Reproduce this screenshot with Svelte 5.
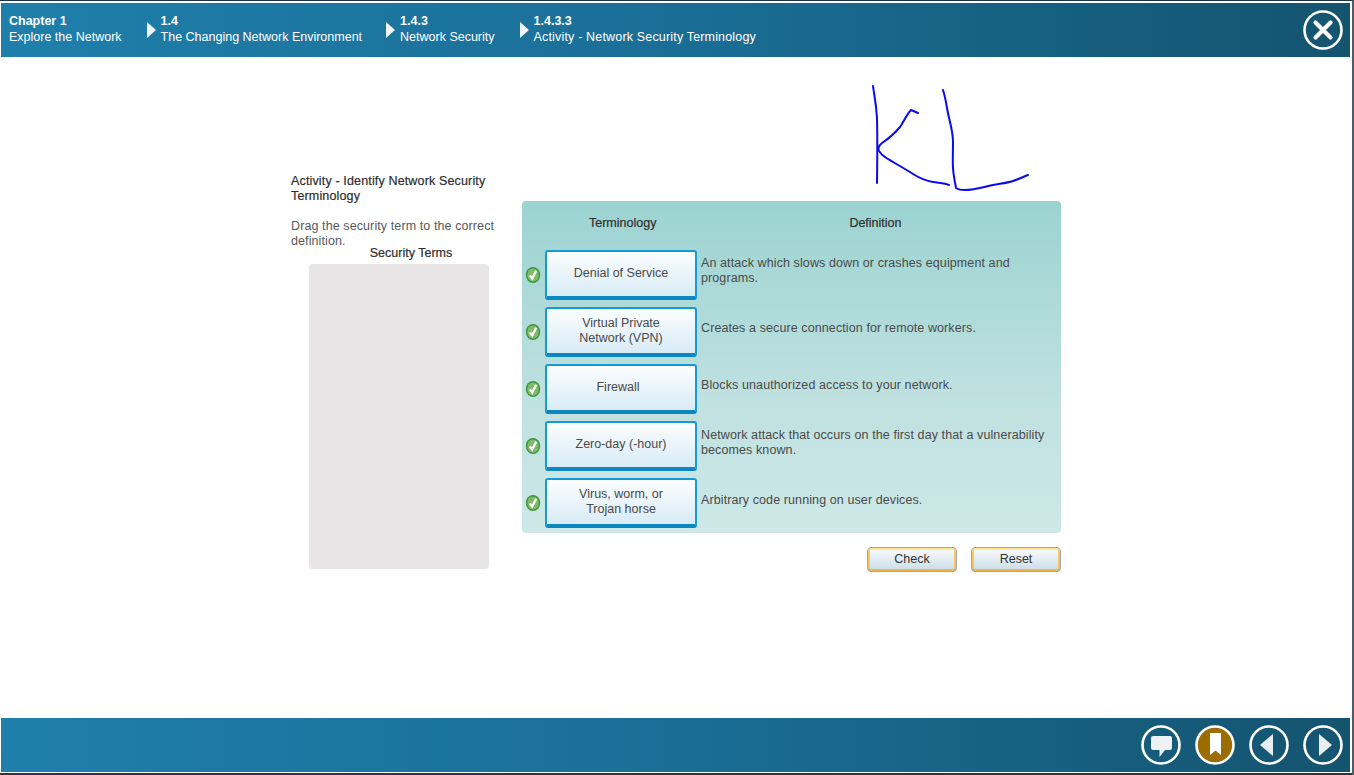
<script>
  const crumbs = [
    { num: "Chapter 1", title: "Explore the Network" },
    { num: "1.4", title: "The Changing Network Environment" },
    { num: "1.4.3", title: "Network Security" },
    { num: "1.4.3.3", title: "Activity - Network Security Terminology" },
  ];

  const rows = [
    { term: ["Denial of Service"], def: "An attack which slows down or crashes equipment and programs." },
    { term: ["Virtual Private", "Network (VPN)"], def: "Creates a secure connection for remote workers." },
    { term: ["Firewall"], def: "Blocks unauthorized access to your network.", off: true },
    { term: ["Zero-day (-hour)"], def: "Network attack that occurs on the first day that a vulnerability becomes known." },
    { term: ["Virus, worm, or", "Trojan horse"], def: "Arbitrary code running on user devices." },
  ];
</script>

<div class="page">
  <header class="bar top">
    <nav class="crumbs">
      {#each crumbs as c, i}
        {#if i > 0}
          <svg class="arrow" width="9" height="16" viewBox="0 0 9 16"><path d="M0 0 L9 8 L0 16 Z" fill="#f2f5f7" /></svg>
        {/if}
        <div class="crumb">
          <b>{c.num}</b>
          <span>{c.title}</span>
        </div>
      {/each}
    </nav>
    <button class="round close" type="button" aria-label="Close">
      <svg width="40" height="40" viewBox="0 0 40 40">
        <circle cx="20" cy="20" r="18.500" fill="none" stroke="#fff" stroke-width="2.600" />
        <path d="M12.500 12.500 L27.500 27.500 M27.500 12.500 L12.500 27.500" stroke="#fff" stroke-width="4.200" stroke-linecap="round" />
      </svg>
    </button>
  </header>

  <main>
    <svg class="scribble" width="180" height="120" viewBox="0 0 180 120">
      <g fill="none" stroke="#0a0af0" stroke-width="2" stroke-linecap="round" stroke-linejoin="round">
        <path d="M2 2 C3 10 5 18 6 34 C6.500 55 6.300 78 6 99" />
        <path d="M47 29 L40 26 C36 30 33 37 29 43 C24 49 17 55 11 59 C7 62 7 66 8 67 C10 70 12 72 14 73 C23 79 33 84 42 90 C50 95 56 97 62 98 C68 99 74 99 78 101" />
        <path d="M72 6 C74 12 75 18 76 24 C78 36 82 46 82 58 C82 70 81.500 78 82 84 C82.500 92 84 98 85 104 C88 106 92 106 94 106 C104 106 112 103 122 101 C130 99.500 136 99 142 97 C148 95 152 93 157 91" />
      </g>
    </svg>

    <section class="intro">
      <h1>Activity - Identify Network Security Terminology</h1>
      <p>Drag the security term to the correct definition.</p>
      <h2>Security Terms</h2>
      <div class="terms"></div>
    </section>

    <section class="activity">
      <div class="panel">
        <div class="heads">
          <span class="head-term">Terminology</span>
          <span class="head-def">Definition</span>
        </div>
        {#each rows as r}
          <div class="row">
            <svg class="tick" width="16" height="16" viewBox="0 0 16 16">
              <ellipse cx="8" cy="8" rx="7.200" ry="8" fill="#3f9440" />
              <ellipse cx="8" cy="8" rx="5.800" ry="6.600" fill="#7dbb68" />
              <path d="M4.800 8.400 L7.200 11.600 L11.200 3.800" fill="none" stroke="#fff" stroke-width="2.400" />
            </svg>
            <div class="term" class:off={r.off}>
              {#each r.term as line}
                <span>{line}</span>
              {/each}
            </div>
            <p class="def">{r.def}</p>
          </div>
        {/each}
      </div>
      <div class="actions">
        <button type="button">Check</button>
        <button type="button">Reset</button>
      </div>
    </section>
  </main>

  <footer class="bar bottom">
    <button class="round" type="button" aria-label="Comments">
      <svg width="40" height="40" viewBox="0 0 40 40">
        <circle cx="20" cy="20" r="18.500" fill="none" stroke="#fff" stroke-width="2.600" />
        <path d="M12 11 H29 Q31 11 31 13 V23 Q31 25 29 25 H24 L18.500 32 V25 H12 Q10 25 10 23 V13 Q10 11 12 11 Z" fill="#eef2f5" />
      </svg>
    </button>
    <button class="round" type="button" aria-label="Bookmark">
      <svg width="40" height="40" viewBox="0 0 40 40">
        <circle cx="20" cy="20" r="18.500" fill="#9b6c00" stroke="#fff" stroke-width="2.600" />
        <path d="M15 8 H26 V30 L20.500 25.500 L15 30 Z" fill="#fff" />
      </svg>
    </button>
    <button class="round" type="button" aria-label="Previous">
      <svg width="40" height="40" viewBox="0 0 40 40">
        <circle cx="20" cy="20" r="18.500" fill="none" stroke="#fff" stroke-width="2.600" />
        <path d="M24 9 V31 L11 20 Z" fill="#e9eef2" />
      </svg>
    </button>
    <button class="round" type="button" aria-label="Next">
      <svg width="40" height="40" viewBox="0 0 40 40">
        <circle cx="20" cy="20" r="18.500" fill="none" stroke="#fff" stroke-width="2.600" />
        <path d="M16 9 V31 L29 20 Z" fill="#e9eef2" />
      </svg>
    </button>
  </footer>
  <div class="strip"></div>
</div>

<style>
  :global(body) {
    margin: 0;
    background: #fff;
  }

  .page {
    height: 775px;
    display: flex;
    flex-direction: column;
    overflow: hidden;
    font-family: "Liberation Sans", Arial, sans-serif;
    border-top: 1px solid #1a3547;
    border-right: 2px solid #4d5d68;
    box-sizing: border-box;
    color: #3d3d3d;
  }

  .bar {
    height: 54px;
    flex: none;
    margin: 0 2px 0 1px;
    display: flex;
    align-items: center;
    color: #fff;
    background: linear-gradient(90deg, #1f7fab 0%, #1a6e96 50%, #14546f 100%);
  }

  .top {
    justify-content: space-between;
    padding: 0 7px 0 8px;
    margin-top: 2px;
  }

  .crumbs {
    display: flex;
    align-items: center;
  }

  .crumb {
    display: flex;
    flex-direction: column;
    font-size: 12.500px;
    line-height: 16px;
    padding-bottom: 2px;
  }

  .crumb:nth-of-type(1) {
    margin-right: 25px;
  }

  .crumb:nth-of-type(2) {
    margin-right: 24px;
  }

  .crumb:nth-of-type(3) {
    margin-right: 25px;
  }

  .crumb:nth-of-type(4) span {
    letter-spacing: 0.170px;
  }

  .arrow {
    margin-right: 5px;
  }

  .round {
    width: 40px;
    height: 40px;
    padding: 0;
    border: none;
    background: none;
    display: block;
  }

  main {
    flex: 1;
    position: relative;
    display: flex;
    align-items: flex-start;
    padding: 117px 0 0 291px;
  }

  .scribble {
    position: absolute;
    left: 871px;
    top: 27px;
  }

  .intro {
    width: 207px;
    margin-right: 24px;
    font-size: 12.500px;
    line-height: 15px;
    letter-spacing: 0.100px;
  }

  h1 {
    margin: 0 0 15px;
    font-size: 12.500px;
    line-height: 15px;
    font-weight: 400;
    letter-spacing: 0.150px;
    color: #2e2e2e;
    -webkit-text-stroke: 0.200px #2e2e2e;
  }

  .intro p {
    margin: 0;
    color: #5a5a5a;
  }

  h2 {
    margin: -3px 0 0;
    padding: 0 0 3px 30px;
    width: 180px;
    text-align: center;
    font-size: 12.500px;
    line-height: 15px;
    font-weight: 400;
    color: #2e2e2e;
    -webkit-text-stroke: 0.200px #2e2e2e;
    letter-spacing: 0;
  }

  .terms {
    width: 180px;
    height: 305px;
    margin-left: 18px;
    background: #e7e5e6;
    border-radius: 4px;
  }

  .activity {
    width: 539px;
    margin-top: 27px;
  }

  .panel {
    height: 332px;
    box-sizing: border-box;
    border-radius: 4px;
    padding: 0 0 0 3px;
    background: linear-gradient(180deg, #9bd3d1 0%, #bfe1e0 60%, #cde8e7 100%);
    display: flex;
    flex-direction: column;
    gap: 7px;
    font-size: 12.500px;
    line-height: 15px;
  }

  .heads {
    height: 42px;
    box-sizing: border-box;
    padding-top: 3px;
    display: flex;
    align-items: center;
    color: #2e2e2e;
    -webkit-text-stroke: 0.200px #2e2e2e;
  }

  .head-term {
    margin-left: 64px;
  }

  .head-def {
    margin-left: 193px;
  }

  .row {
    height: 50px;
    display: flex;
    align-items: center;
  }

  .tick {
    margin: 0 4px 0 0;
  }

  .term {
    width: 152px;
    height: 50px;
    box-sizing: border-box;
    border: 2px solid #149bd7;
    border-bottom: 4px solid #0d87bf;
    border-radius: 3px;
    background: linear-gradient(180deg, #fbfdfe 0%, #d8ebf6 100%);
    display: flex;
    flex-direction: column;
    align-items: center;
    justify-content: center;
    color: #4a4a4a;
    flex: none;
  }

  .term span:only-child {
    margin-bottom: 2px;
  }

  .term.off {
    padding-right: 6px;
  }

  .def {
    margin: 0 0 0 4px;
    width: 345px;
    color: #4a4a4a;
    letter-spacing: 0.100px;
    position: relative;
    top: -3px;
  }

  .row:nth-child(-n + 4) .def {
    top: -4px;
  }

  .actions {
    display: flex;
    justify-content: flex-end;
    gap: 14px;
    margin-top: 14px;
  }

  .actions button {
    width: 90px;
    height: 25px;
    padding: 0 0 1px;
    font: 12.500px/1 "Liberation Sans", Arial, sans-serif;
    color: #333;
    border: 1px solid #a5a5a5;
    border-radius: 4px;
    background: linear-gradient(180deg, #fbfcfd 0%, #c9dcea 100%);
    box-shadow: inset 0 2px 0 #fde68f, inset 0 -2px 0 #f2b347, inset 2px 0 0 #f5c75e, inset -2px 0 0 #f5c75e;
  }

  .bottom {
    justify-content: flex-end;
    gap: 14px;
    padding: 0 7px 0 0;
    margin-bottom: 1px;
  }

  .strip {
    height: 2px;
    flex: none;
    background: #26373f;
  }
</style>
